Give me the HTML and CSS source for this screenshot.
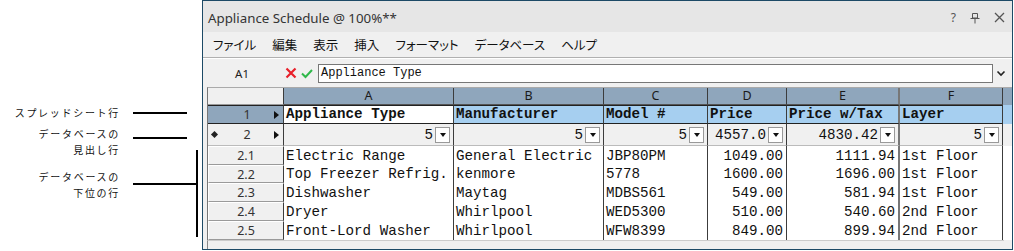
FILE: index.html
```html
<!DOCTYPE html>
<html lang="ja">
<head>
    <meta charset="UTF-8">
    <title>Appliance Schedule</title>
    <link rel="stylesheet" href="styles.css">
</head>
<body>
<div class="page">

    <!-- 左側の注釈 -->
    <aside class="notes">
        <div class="note note-sheet">
            <div class="note-text">スプレッドシート行</div>
            <div class="rule"></div>
        </div>
        <div class="note note-head">
            <div class="note-text">データベースの<br>見出し行</div>
            <div class="rule"></div>
        </div>
        <div class="note note-sub">
            <div class="note-text">データベースの<br>下位の行</div>
            <div class="rule"></div>
            <div class="bracket"></div>
        </div>
    </aside>

    <section class="window">
        <header class="titlebar">
            <span class="title">Appliance Schedule @ 100%**</span>
            <span class="tb-btn">?</span>
            <svg class="tb-btn" width="10" height="12" viewBox="0 0 10 12">
                <path d="M2.5 1.5h5v4.5h-5z M0.5 6.5h9 M5 6.5v5" fill="none" stroke="#555" stroke-width="1"/>
            </svg>
            <svg class="tb-btn" width="11" height="11" viewBox="0 0 11 11">
                <path d="M1 1l9 9M10 1l-9 9" stroke="#555" stroke-width="1.3"/>
            </svg>
        </header>

        <nav class="menubar">
            <span>ファイル</span>
            <span>編集</span>
            <span>表示</span>
            <span>挿入</span>
            <span>フォーマット</span>
            <span>データベース</span>
            <span>ヘルプ</span>
        </nav>

        <div class="formula">
            <span class="cellref">A1</span>
            <svg class="fx-icon" width="12" height="12" viewBox="0 0 12 12">
                <path d="M1.5 1.5l9 9M10.5 1.5l-9 9" stroke="#e8202a" stroke-width="2.2"/>
            </svg>
            <svg class="fx-icon" width="12" height="12" viewBox="0 0 12 12">
                <path d="M1 6.5l3.5 3.5 6.5-7" fill="none" stroke="#2fb84a" stroke-width="2"/>
            </svg>
            <div class="fx-input">Appliance Type</div>
            <svg class="fx-drop" width="10" height="7" viewBox="0 0 10 7">
                <path d="M1.5 1.5l3.5 3.5 3.5-3.5" fill="none" stroke="#222" stroke-width="1.6"/>
            </svg>
        </div>

        <div class="sheet">
            <div class="grid">
                <div class="row colhead">
                    <div class="rh"></div>
                    <div>A</div><div>B</div><div>C</div><div>D</div><div>E</div><div>F</div>
                </div>

                <div class="row sheetrow">
                    <div class="rh"><span class="mark"></span><span class="num">1</span><span class="tri"></span></div>
                    <div class="c sel">Appliance Type</div>
                    <div class="c">Manufacturer</div>
                    <div class="c">Model #</div>
                    <div class="c">Price</div>
                    <div class="c">Price w/Tax</div>
                    <div class="c">Layer</div>
                </div>

                <div class="row dbhead">
                    <div class="rh"><span class="mark dia"></span><span class="num">2</span><span class="tri"></span></div>
                    <div class="c r">5<span class="dd"></span></div>
                    <div class="c r">5<span class="dd"></span></div>
                    <div class="c r">5<span class="dd"></span></div>
                    <div class="c r">4557.0<span class="dd"></span></div>
                    <div class="c r">4830.42<span class="dd"></span></div>
                    <div class="c r">5<span class="dd"></span></div>
                </div>

                <div class="row sub">
                    <div class="rh">2.1</div>
                    <div class="c">Electric Range</div>
                    <div class="c">General Electric</div>
                    <div class="c">JBP80PM</div>
                    <div class="c r">1049.00</div>
                    <div class="c r">1111.94</div>
                    <div class="c">1st Floor</div>
                </div>
                <div class="row sub short">
                    <div class="rh">2.2</div>
                    <div class="c">Top Freezer Refrig.</div>
                    <div class="c">kenmore</div>
                    <div class="c">5778</div>
                    <div class="c r">1600.00</div>
                    <div class="c r">1696.00</div>
                    <div class="c">1st Floor</div>
                </div>
                <div class="row sub">
                    <div class="rh">2.3</div>
                    <div class="c">Dishwasher</div>
                    <div class="c">Maytag</div>
                    <div class="c">MDBS561</div>
                    <div class="c r">549.00</div>
                    <div class="c r">581.94</div>
                    <div class="c">1st Floor</div>
                </div>
                <div class="row sub">
                    <div class="rh">2.4</div>
                    <div class="c">Dryer</div>
                    <div class="c">Whirlpool</div>
                    <div class="c">WED5300</div>
                    <div class="c r">510.00</div>
                    <div class="c r">540.60</div>
                    <div class="c">2nd Floor</div>
                </div>
                <div class="row sub">
                    <div class="rh">2.5</div>
                    <div class="c">Front-Lord Washer</div>
                    <div class="c">Whirlpool</div>
                    <div class="c">WFW8399</div>
                    <div class="c r">849.00</div>
                    <div class="c r">899.94</div>
                    <div class="c">2nd Floor</div>
                </div>
            </div>
            <div class="hscroll"></div>
        </div>
    </section>
</div>
</body>
</html>
```

FILE: styles.css
```css
:root {
    --win-border: #1d4a66;
    --title-bg: #e6e6e6;
    --panel-bg: #f0f0f0;
    --head-bg: #8fa6bc;
    --row1-bg: #a6cff0;
    --grid-line: #3c3c3c;
    --cell-font: "Liberation Mono", "DejaVu Sans Mono", monospace;
    --ui-font: "Noto Sans", "Noto Sans CJK JP", sans-serif;
}

* { box-sizing: border-box; }

body {
    margin: 0;
    width: 1014px;
    height: 251px;
    overflow: hidden;
    background: #fff;
    font-family: var(--ui-font);
}

.page {
    display: flex;
    height: 251px;
}

/* --- 注釈 --- */
.notes {
    width: 202px;
    flex: none;
    display: flex;
    flex-direction: column;
    padding-top: 105px;
    font-family: "Noto Sans CJK JP", sans-serif;
    font-size: 10px;
    color: #111;
}
.note { display: flex; }
.note-text {
    width: 120px;
    text-align: right;
    letter-spacing: 1.7px;
    line-height: 16px;
}
.rule {
    height: 2px;
    background: #000;
    margin-left: 13px;
    width: 54px;
}
.note-sheet { align-items: center; height: 16px; }
.note-head { margin-top: 5px; }
.note-head .rule { margin-top: 11px; }
.note-sub { margin-top: -8px; }
.note-sub .note-text { margin-top: 19px; }
.note-sub .rule { margin-top: 33px; width: 63px; }
.bracket {
    width: 2px;
    height: 87px;
    background: #000;
}

/* --- ウィンドウ --- */
.window {
    width: 811px;
    height: 250px;
    flex: none;
    border: 1px solid var(--win-border);
    background: var(--panel-bg);
    display: flex;
    flex-direction: column;
}
.titlebar {
    height: 31px;
    flex: none;
    background: var(--title-bg);
    display: flex;
    align-items: center;
    padding: 2px 7px 0 5px;
    font-size: 13.3px;
    color: #333;
}
.title { flex: 1; }
.tb-btn { margin-left: 14px; color: #555; font-size: 12px; }

.menubar {
    height: 26px;
    flex: none;
    display: flex;
    align-items: center;
    gap: 16px;
    padding-left: 10px;
    border-bottom: 1px solid #b0b0b0;
    font-family: "Noto Sans CJK JP", sans-serif;
    font-feature-settings: "palt";
    font-size: 12.5px;
    color: #111;
}

.formula {
    height: 29px;
    flex: none;
    display: flex;
    align-items: center;
    border-top: 1px solid #fff;
}
.cellref {
    width: 78px;
    text-align: center;
    font-size: 11.5px;
    color: #222;
}
.fx-icon { margin-left: 4px; }
.fx-input {
    width: 675px;
    height: 19px;
    margin-left: 5px;
    background: #fff;
    border: 1px solid #777;
    font-family: var(--cell-font);
    font-size: 12px;
    line-height: 17px;
    padding-left: 2px;
    color: #111;
}
.fx-drop { margin-left: 3px; }

/* --- シート --- */
.sheet {
    flex: 1;
    display: flex;
    flex-direction: column;
    padding-left: 4px;
}
.grid {
    border-left: 1px solid #777;
    border-top: 1px solid #aaa;
    background: #fff;
}
.row {
    display: grid;
    grid-template-columns: 76px 170px 150px 104px 79px 113px 103px;
}
.row > div {
    border-right: 1px solid var(--grid-line);
    overflow: hidden;
    white-space: nowrap;
}
.rh {
    display: flex;
    align-items: center;
    justify-content: center;
    background: var(--panel-bg);
    font-size: 12.5px;
    color: #333;
}

.colhead { height: 17px; background: var(--head-bg); }
.colhead > div {
    text-align: center;
    font-size: 12.5px;
    line-height: 16px;
    color: #1a1a1a;
    border-bottom: 1px solid #555;
}
.colhead .rh { background: var(--panel-bg); border-bottom-color: #999; }

.c {
    font-family: var(--cell-font);
    font-size: 14.2px;
    padding: 0 2px;
    color: #111;
}
.c.r {
    display: flex;
    align-items: center;
    justify-content: flex-end;
    padding-right: 3px;
}

.sheetrow { height: 19px; background: var(--row1-bg); }
.sheetrow > div {
    border-top: 1px solid #222;
    border-bottom: 1px solid #222;
}
.sheetrow .c { font-weight: bold; line-height: 16px; }
.sheetrow .c.sel { background: #fff; }
.sheetrow .rh { background: var(--head-bg); }

.rh .mark { width: 12px; flex: none; display: flex; justify-content: center; }
.rh .num { flex: 1; text-align: center; }
.rh .tri {
    width: 0;
    height: 0;
    margin-right: 4px;
    border-top: 4px solid transparent;
    border-bottom: 4px solid transparent;
    border-left: 5px solid #111;
}
.rh .dia::before {
    content: "";
    width: 5px;
    height: 5px;
    background: #222;
    transform: rotate(45deg);
}

.dbhead { height: 22px; background: var(--panel-bg); }
.dbhead > div { border-bottom: 1px solid #bbb; }
.dd {
    width: 15px;
    height: 16px;
    margin-left: 2px;
    background: #fff;
    border: 1px solid #999;
    display: flex;
    align-items: center;
    justify-content: center;
}
.dd::before {
    content: "";
    border-left: 3.5px solid transparent;
    border-right: 3.5px solid transparent;
    border-top: 4px solid #111;
}

.sub { height: 19px; }
.sub.short { height: 18px; }
.sub .c { display: flex; align-items: center; }
.sub .c.r { padding-right: 3px; }
.sub .rh {
    border-top: 1px solid #fff;
    border-bottom: 1px solid #9a9a9a;
    border-left: 1px solid #fff;
}
.row > div:nth-child(6) { border-right: 2px solid #777; }

.hscroll {
    flex: 1;
    border-top: 1px solid #ccc;
    border-left: 1px solid #888;
    margin-right: 8px;
}
```
